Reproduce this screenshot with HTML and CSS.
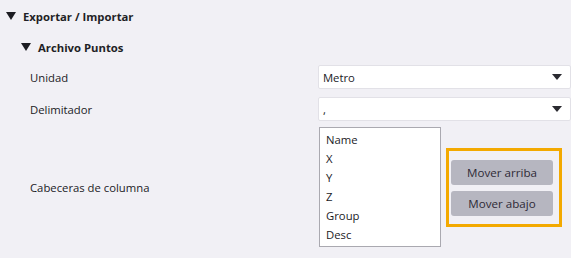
FILE: index.html
```html
<!DOCTYPE html>
<html lang="es">
<head>
  <meta charset="UTF-8" />
  <title>Exportar / Importar</title>
  <link rel="stylesheet" href="styles.css">
</head>
<body>

  <div class="panel">
    <div class="group-header">
      <span class="caret"></span>
      <span class="group-title">Exportar / Importar</span>
    </div>

    <div class="sub-header">
      <span class="caret"></span>
      <span class="group-title">Archivo Puntos</span>
    </div>

    <div class="field-row row-unit">
      <label class="field-label">Unidad</label>
      <div class="select-box">
        <span class="select-value">Metro</span>
        <span class="select-arrow"></span>
      </div>
    </div>

    <div class="field-row row-delim">
      <label class="field-label">Delimitador</label>
      <div class="select-box">
        <span class="select-value">,</span>
        <span class="select-arrow"></span>
      </div>
    </div>

    <div class="field-row row-columns">
      <label class="field-label">Cabeceras de columna</label>
      <div class="columns-control">
        <ul class="column-list">
          <li>Name</li>
          <li>X</li>
          <li>Y</li>
          <li>Z</li>
          <li>Group</li>
          <li>Desc</li>
        </ul>
        <div class="move-buttons">
          <button type="button">Mover arriba</button>
          <button type="button">Mover abajo</button>
        </div>
      </div>
    </div>
  </div>

</body>
</html>
```

FILE: styles.css
```css
body {
  margin: 0;
  background-color: #f1f0f5;
  font-family: "Open Sans", "Noto Sans", Arial, sans-serif;
  font-size: 11.3px;
  color: #1b1b1f;
}

.panel {
  width: 571px;
  height: 258px;
}

.group-header,
.sub-header {
  display: flex;
  align-items: center;
  font-weight: bold;
  color: #1f1f26;
}

.group-header {
  height: 32px;
  padding-left: 6px;
}

.sub-header {
  height: 30px;
  padding-left: 21px;
}

.caret {
  width: 0;
  height: 0;
  border-left: 5px solid transparent;
  border-right: 5px solid transparent;
  border-top: 8px solid #1c1c22;
  margin-right: 7px;
}

.field-row {
  display: flex;
  align-items: center;
}

.row-unit {
  margin-top: 3px;
}

.row-delim {
  margin-top: 8px;
}

.row-columns {
  margin-top: 6px;
}

.field-label {
  width: 289px;
  padding-left: 30px;
}

.select-box {
  width: 240px;
  height: 22px;
  background: white;
  border: 1px solid #e2e1e7;
  border-radius: 2px;
  display: flex;
  align-items: center;
  justify-content: space-between;
  padding: 0 8px 0 4px;
}

.select-arrow {
  width: 0;
  height: 0;
  border-left: 5px solid transparent;
  border-right: 5px solid transparent;
  border-top: 6px solid #2a2a30;
}

.columns-control {
  display: flex;
  align-items: center;
}

.column-list {
  list-style: none;
  margin: 0;
  padding: 2px 0 0 6px;
  width: 114px;
  height: 116px;
  background: white;
  border: 1px solid #aaa9b0;
}

.column-list li {
  height: 19px;
  line-height: 19px;
}

.move-buttons {
  display: flex;
  flex-direction: column;
  gap: 6px;
  margin-left: 5px;
  margin-top: 1px;
  padding: 9px 6px 8px 2px;
  border: 3px solid #f3a900;
}

.move-buttons button {
  width: 102px;
  height: 25px;
  border: none;
  border-radius: 3px;
  background-color: #b6b6c0;
  color: #2e2a36;
  font-family: inherit;
  font-size: 11.6px;
  padding: 0;
}
```
